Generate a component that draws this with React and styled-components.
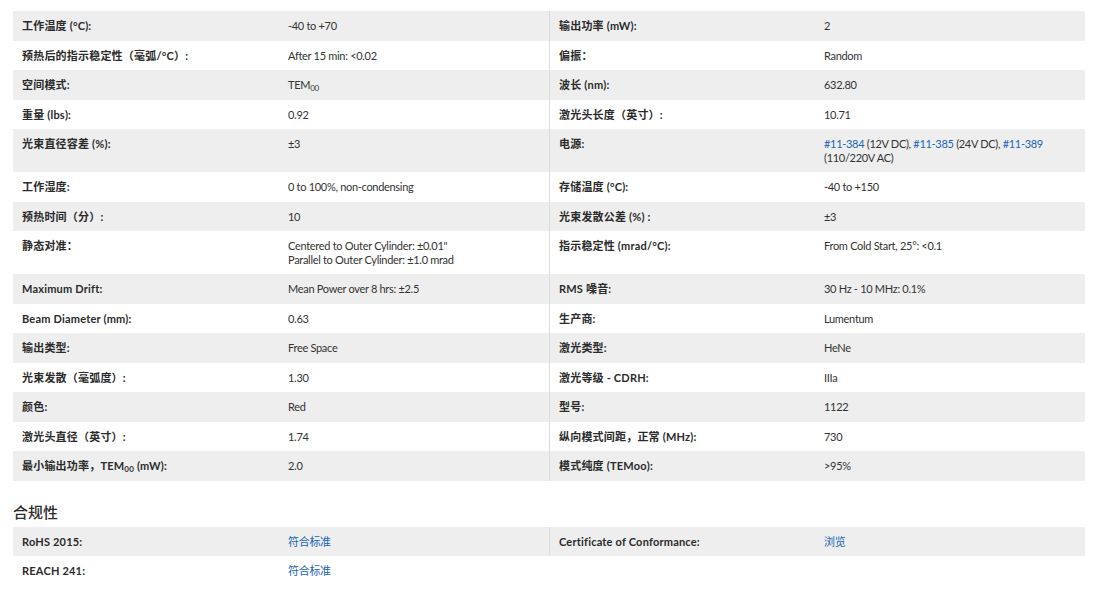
import React from 'react';
import styled, { createGlobalStyle } from 'styled-components';

const GlobalStyle = createGlobalStyle`
  body {
    margin: 0;
    background: #fff;
    font-family: 'Lato', 'Noto Sans CJK SC', sans-serif;
    color: #333;
  }
`;

const TEM = () => (
  <>
    TEM<Sub>00</Sub>
  </>
);

const Link = ({ children }) => <A href="#" onClick={(e) => e.preventDefault()}>{children}</A>;

const specs = [
  ['工作温度 (°C):', '-40 to +70', '输出功率 (mW):', '2'],
  ['预热后的指示稳定性（毫弧/°C）:', 'After 15 min: <0.02', '偏振：', 'Random'],
  ['空间模式:', <TEM />, '波长 (nm):', '632.80'],
  ['重量 (lbs):', '0.92', '激光头长度（英寸）:', '10.71'],
  [
    '光束直径容差 (%):',
    '±3',
    '电源:',
    <>
      <Link>#11-384</Link> (12V DC), <Link>#11-385</Link> (24V DC), <Link>#11-389</Link> (110/220V AC)
    </>,
  ],
  ['工作湿度:', '0 to 100%, non-condensing', '存储温度 (°C):', '-40 to +150'],
  ['预热时间（分）:', '10', '光束发散公差 (%) :', '±3'],
  [
    '静态对准：',
    <>
      Centered to Outer Cylinder: ±0.01"
      <br />
      Parallel to Outer Cylinder: ±1.0 mrad
    </>,
    '指示稳定性 (mrad/°C):',
    'From Cold Start, 25°: <0.1',
  ],
  ['Maximum Drift:', 'Mean Power over 8 hrs: ±2.5', 'RMS 噪音:', '30 Hz - 10 MHz: 0.1%'],
  ['Beam Diameter (mm):', '0.63', '生产商:', 'Lumentum'],
  ['输出类型:', 'Free Space', '激光类型:', 'HeNe'],
  ['光束发散（毫弧度）:', '1.30', '激光等级 - CDRH:', 'IIIa'],
  ['颜色:', 'Red', '型号:', '1122'],
  ['激光头直径（英寸）:', '1.74', '纵向模式间距，正常 (MHz):', '730'],
  [<>最小输出功率，<TEM /> (mW):</>, '2.0', '模式纯度 (TEMoo):', '>95%'],
];

const compliance = [
  ['RoHS 2015:', <Link>符合标准</Link>, 'Certificate of Conformance:', <Link>浏览</Link>],
  ['REACH 241:', <Link>符合标准</Link>],
];

const SpecTable = ({ rows }) => (
  <Table>
    {rows.map(([l1, v1, l2, v2], i) => (
      <Row key={i} $alt={i % 2 === 0}>
        <Label>{l1}</Label>
        <Value>{v1}</Value>
        <Label $divided={l2 !== undefined}>{l2}</Label>
        <Value>{v2}</Value>
      </Row>
    ))}
  </Table>
);

export default function App() {
  return (
    <>
      <GlobalStyle />
      <Page>
        <SpecTable rows={specs} />
        <Heading>合规性</Heading>
        <SpecTable rows={compliance} />
      </Page>
    </>
  );
}

const Page = styled.div`
  width: 1072px;
  padding: 11px 0 0 13px;
`;

const Table = styled.div`
  display: flex;
  flex-direction: column;
`;

const Row = styled.div`
  display: grid;
  grid-template-columns: 266px 270px 266px 1fr;
  background: ${(p) => (p.$alt ? '#eeeeee' : '#fff')};
`;

const Cell = styled.div`
  padding: 8px 9px;
  font-size: 11px;
  line-height: 13.5px;
`;

const Label = styled(Cell)`
  font-weight: 700;
  color: #2b2b2b;
  letter-spacing: 0.2px;
  border-left: ${(p) => (p.$divided ? '1px solid #dcdcdc' : 'none')};
`;

const Value = styled(Cell)`
  color: #333;
  letter-spacing: -0.3px;
`;

const Sub = styled.sub`
  font-size: 8px;
  line-height: 0;
  vertical-align: -2px;
`;

const A = styled.a`
  color: #1a64b8;
  text-decoration: none;
`;

const Heading = styled.h2`
  margin: 21px 0 5px;
  font-size: 15px;
  line-height: 20px;
  font-weight: 500;
  color: #2b2b2b;
`;
